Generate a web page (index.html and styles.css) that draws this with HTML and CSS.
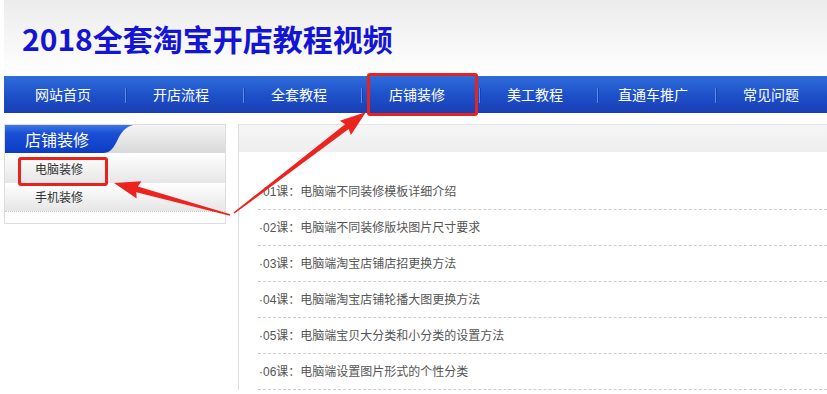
FILE: index.html
```html
<!DOCTYPE html>
<html lang="zh-CN">
<head>
    <meta charset="UTF-8">
    <meta name="viewport" content="width=device-width, initial-scale=1.0">
    <title>2018全套淘宝开店教程视频</title>
    <link rel="stylesheet" href="styles.css">
</head>
<body>

<div class="page">
    <!-- Header -->
    <div class="header">
        <h1 class="site-title">2018全套淘宝开店教程视频</h1>
    </div>

    <!-- Main navigation -->
    <ul class="nav">
        <li class="nav-item">网站首页</li>
        <li class="nav-item">开店流程</li>
        <li class="nav-item">全套教程</li>
        <li class="nav-item">店铺装修</li>
        <li class="nav-item">美工教程</li>
        <li class="nav-item">直通车推广</li>
        <li class="nav-item last">常见问题</li>
    </ul>

    <div class="content">
        <!-- Sidebar -->
        <div class="sidebar">
            <div class="side-head">
                <span class="side-title">店铺装修</span>
            </div>
            <ul class="side-list">
                <li class="side-item">电脑装修</li>
                <li class="side-item">手机装修</li>
            </ul>
        </div>

        <!-- Lesson list -->
        <div class="main">
            <div class="main-head"></div>
            <ul class="lesson-list">
                <li class="lesson">·01课：电脑端不同装修模板详细介绍</li>
                <li class="lesson">·02课：电脑端不同装修版块图片尺寸要求</li>
                <li class="lesson">·03课：电脑端淘宝店铺店招更换方法</li>
                <li class="lesson">·04课：电脑端淘宝店铺轮播大图更换方法</li>
                <li class="lesson">·05课：电脑端宝贝大分类和小分类的设置方法</li>
                <li class="lesson">·06课：电脑端设置图片形式的个性分类</li>
            </ul>
        </div>
    </div>

    <!-- Annotation marks drawn over the page -->
    <div class="mark mark-nav"></div>
    <div class="mark mark-side"></div>
    <svg class="arrows" width="827" height="394" viewBox="0 0 827 394">
        <polygon points="234.5,213.6 348.7,129.0 350.9,134.9 366,112 339.9,120.7 345.1,124.2 233.5,212.4"/>
        <polygon points="230.2,214.3 137.9,186.5 141.5,181.2 114,183 136.7,198.6 136.3,192.3 229.8,215.7"/>
    </svg>
</div>

</body>
</html>
```

FILE: styles.css
```css
body {
    margin: 0;
    background-color: #fff;
    font-family: "Noto Sans CJK SC", "Microsoft YaHei", sans-serif;
}

ul {
    list-style: none;
    margin: 0;
    padding: 0;
}

.page {
    position: relative;
    width: 827px;
    height: 394px;
    overflow: hidden;
    padding-left: 4px;
    box-sizing: border-box;
}

/* Header */
.header {
    height: 76px;
    display: flex;
    align-items: center;
    padding-left: 18px;
    background: linear-gradient(#ececec, #ffffff);
}

.site-title {
    margin: 0;
    font-size: 30px;
    font-weight: bold;
    color: #1414d4;
    line-height: 1;
}

/* Navigation */
.nav {
    display: flex;
    height: 37px;
    background: linear-gradient(#2f6ddb, #1d4fc8 55%, #1a3fb5);
}

.nav-item {
    position: relative;
    width: 118px;
    flex: none;
    line-height: 37px;
    text-align: center;
    font-size: 14px;
    color: #fff;
}

.nav-item::after {
    content: "";
    position: absolute;
    right: -4px;
    top: 12px;
    height: 15px;
    width: 1px;
    background-color: #5a8ae6;
    box-shadow: 1px 0 0 #1a3fae;
}

.nav-item.last::after {
    display: none;
}

/* Content columns */
.content {
    display: flex;
    gap: 12px;
    margin-top: 11px;
}

/* Sidebar */
.sidebar {
    width: 222px;
    height: 100px;
    box-sizing: border-box;
    border: 1px solid #dddddd;
    flex: none;
}

.side-head {
    height: 28px;
    background: linear-gradient(#f4f4f4, #d9d9d9);
}

.side-title {
    display: block;
    width: 130px;
    height: 28px;
    box-sizing: border-box;
    padding-left: 20px;
    line-height: 28px;
    font-size: 16px;
    color: #fff;
    background: linear-gradient(#3d78e4, #1a4fd4 30%, #0c3cc6);
    clip-path: path('M0 0 H128 C120 2 116 8 113 14 C109 22 106 28 98 28 H0 Z');
}

.side-item {
    height: 30px;
    line-height: 31px;
    padding-left: 30px;
    font-size: 12px;
    color: #333;
    background: linear-gradient(#ffffff, #e6e6e6);
}

.side-item:last-child {
    height: 28px;
    line-height: 28px;
    border-bottom: 1px dotted #c8c8c8;
}

/* Lesson list */
.main {
    flex: 1;
    border-left: 1px solid #dddddd;
    border-top: 1px solid #e4e4e4;
}

.main-head {
    height: 27px;
    background: linear-gradient(#f6f6f6, #eeeeee);
}

.lesson-list {
    margin-left: 19px;
    padding-top: 22px;
}

.lesson {
    height: 35px;
    line-height: 36px;
    padding-left: 1px;
    font-family: "Liberation Sans", "Noto Sans CJK SC", sans-serif;
    font-size: 12px;
    color: #555;
    border-bottom: 1px dashed #cccccc;
}

/* Annotations */
.mark {
    position: absolute;
    border: 3px solid #e8231f;
    border-radius: 3px;
    box-sizing: border-box;
}

.mark-nav {
    left: 367px;
    top: 73px;
    width: 111px;
    height: 43px;
}

.mark-side {
    left: 18px;
    top: 157px;
    width: 90px;
    height: 29px;
}

.arrows {
    position: absolute;
    left: 0;
    top: 0;
    fill: #ec2420;
    pointer-events: none;
}
```
